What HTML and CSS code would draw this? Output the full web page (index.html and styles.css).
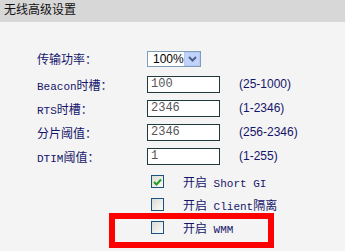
FILE: index.html
```html
<!DOCTYPE html>
<html lang="zh-CN">
<head>
    <meta charset="UTF-8">
    <title>无线高级设置</title>
    <link rel="stylesheet" href="styles.css">
</head>
<body>
    <div class="title">无线高级设置</div>

    <div class="settings">
        <div class="row first">
            <span class="label">传输功率：</span>
            <div class="select">
                <span class="value">100%</span>
                <span class="arrow">
                    <svg width="9" height="6" viewBox="0 0 9 6"><path d="M1 1 L4.5 4.5 L8 1" fill="none" stroke="#4d6185" stroke-width="2"/></svg>
                </span>
            </div>
        </div>
        <div class="row">
            <span class="label"><span class="en">Beacon</span>时槽：</span>
            <input type="text" value="100">
            <span class="range">(25-1000)</span>
        </div>
        <div class="row">
            <span class="label"><span class="en">RTS</span>时槽：</span>
            <input type="text" value="2346">
            <span class="range">(1-2346)</span>
        </div>
        <div class="row">
            <span class="label">分片阈值：</span>
            <input type="text" value="2346">
            <span class="range">(256-2346)</span>
        </div>
        <div class="row">
            <span class="label"><span class="en">DTIM</span>阈值：</span>
            <input type="text" value="1">
            <span class="range">(1-255)</span>
        </div>

        <div class="check-row gap-top">
            <span class="box checked">
                <svg width="9" height="8" viewBox="0 0 9 8"><path d="M1 4 L3.5 6.5 L8 1.5" fill="none" stroke="#21a121" stroke-width="2"/></svg>
            </span>
            <span class="check-text">开启<span class="en"> Short GI</span></span>
        </div>
        <div class="check-row">
            <span class="box"></span>
            <span class="check-text">开启<span class="en"> Client</span>隔离</span>
        </div>
        <div class="check-row marked">
            <span class="box"></span>
            <span class="check-text">开启<span class="en"> WMM</span></span>
            <span class="mark"></span>
        </div>
    </div>
</body>
</html>
```

FILE: styles.css
```css
html, body {
    height: 100%;
}

body {
    margin: 0;
    overflow: hidden;
    background-color: #f4f4f4;
    font-family: "Noto Sans CJK SC", sans-serif;
    font-size: 12px;
    color: #14146b;
}

.en {
    font-family: "Liberation Mono", monospace;
    font-size: 11px;
}

.title {
    height: 22px;
    line-height: 17px;
    padding-left: 4px;
    background-color: #d7d7d7;
    color: #111;
    font-size: 12px;
}

.settings {
    padding-top: 23px;
    padding-left: 37px;
}

.row {
    display: flex;
    align-items: center;
    height: 24px;
}

.row.first {
    height: 27px;
}

.label {
    width: 110px;
}

.select {
    display: flex;
    align-items: center;
    width: 52px;
    height: 14px;
    border: 1px solid #7f9db9;
    background-color: #fff;
    color: #000;
    font-family: "Liberation Sans", sans-serif;
}

.select .value {
    flex: 1;
    padding-left: 5px;
}

.select .arrow {
    display: flex;
    align-items: center;
    justify-content: center;
    width: 16px;
    height: 14px;
    background-color: #c1d3fb;
    border: 1px solid #b3c8f4;
    box-sizing: border-box;
}

input {
    width: 73px;
    height: 17px;
    padding: 0 3px;
    border: 1px solid #1f3b3b;
    background-color: #fff;
    color: #555;
    font-family: "Liberation Mono", monospace;
    font-size: 12px;
    box-sizing: border-box;
}

.range {
    margin-left: 19px;
    font-family: "Liberation Sans", sans-serif;
}

.check-row {
    position: relative;
    display: flex;
    align-items: center;
    height: 23px;
    padding-left: 114px;
}

.check-row.gap-top {
    margin-top: 2px;
}

.box {
    display: flex;
    align-items: center;
    justify-content: center;
    width: 13px;
    height: 13px;
    border: 1px solid #1c5180;
    background: linear-gradient(135deg, #dcdcd5, #fbfbf9);
    box-sizing: border-box;
}

.check-text {
    margin-left: 19px;
}

.mark {
    position: absolute;
    left: 72px;
    top: -3px;
    width: 165px;
    height: 35px;
    border: 6px solid #f00;
    box-sizing: border-box;
}
```
